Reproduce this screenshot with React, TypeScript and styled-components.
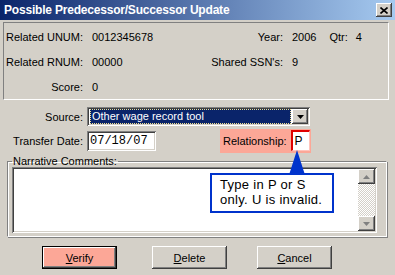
import React from 'react';
import styled, { createGlobalStyle } from 'styled-components';

const Global = createGlobalStyle`
  html, body { margin: 0; padding: 0; background: #d4d0c8; }
  body { font-family: "Liberation Sans", Arial, sans-serif; font-size: 11px; color: #000; }
  * { box-sizing: border-box; }
`;

const Window = styled.div`
  position: relative;
  width: 395px;
  height: 275px;
  overflow: hidden;
  background: #d4d0c8;
  display: flex;
  flex-direction: column;
`;

const TitleBar = styled.div`
  flex: none;
  height: 20px;
  display: flex;
  align-items: center;
  justify-content: space-between;
  padding: 0 3px 0 4px;
  background: linear-gradient(to right, #0a246a, #a6caf0);
  color: #fff;
  font-weight: bold;
  font-size: 12px;
  letter-spacing: -0.2px;
`;

const CloseButton = styled.div`
  width: 16px;
  height: 14px;
  display: flex;
  align-items: center;
  justify-content: center;
  background: #d4d0c8;
  box-shadow: inset -1px -1px #404040, inset 1px 1px #fff, inset -2px -2px #808080;
`;

const Body = styled.div`
  display: flex;
  flex-direction: column;
  padding: 2px 6px 0 3px;
`;

const InfoPanel = styled.div`
  width: 386px;
  height: 78px;
  border: 1px solid;
  border-color: #808080 #fff #fff #808080;
  display: grid;
  grid-template-columns: 79px 100px 82px auto;
  grid-auto-rows: 25px;
  column-gap: 9px;
  align-items: center;
  padding-top: 1px;
`;

const Label = styled.span`
  text-align: right;
  white-space: nowrap;
`;

const Value = styled.span`
  white-space: nowrap;
`;

const YearCell = styled.span`
  display: flex;
  align-items: center;
`;

const Spaced = styled.span<{ $ml: number }>`
  margin-left: ${p => p.$ml}px;
`;

const FormRow = styled.div<{ $mt: number; $h: number }>`
  display: flex;
  align-items: center;
  gap: 4px;
  margin-top: ${p => p.$mt}px;
  height: ${p => p.$h}px;
`;

const FieldLabel = styled.span`
  width: 80px;
  text-align: right;
  white-space: nowrap;
`;

const Select = styled.div`
  width: 223px;
  height: 19px;
  display: flex;
  background: #fff;
  box-shadow: inset 1px 1px #808080, inset -1px -1px #fff, inset 2px 2px #404040, inset -2px -2px #d4d0c8;
  padding: 2px;
`;

const SelectValue = styled.div`
  flex: 1;
  background: #0a246a;
  color: #fff;
  outline: 1px dotted #f0e090;
  outline-offset: -1px;
  padding: 0 2px;
  display: flex;
  align-items: center;
  line-height: 13px;
  margin: 0 1px;
`;

const DropButton = styled.div`
  width: 16px;
  display: flex;
  align-items: center;
  justify-content: center;
  background: #d4d0c8;
  box-shadow: inset -1px -1px #404040, inset 1px 1px #fff, inset -2px -2px #808080;
`;

const MonoInput = styled.div<{ $w: number }>`
  width: ${p => p.$w}px;
  height: 20px;
  background: #fff;
  font-family: "Liberation Mono", "Courier New", monospace;
  font-size: 12px;
  display: flex;
  align-items: center;
  padding-left: 3px;
  box-shadow: inset 1px 1px #808080, inset -1px -1px #fff, inset 2px 2px #404040, inset -2px -2px #d4d0c8;
`;

const RelBox = styled.div`
  margin-left: 60px;
  height: 24px;
  background: #fca797;
  display: flex;
  align-items: center;
  gap: 4px;
  padding: 0 1px 0 3px;
`;

const RelInput = styled.div`
  width: 19px;
  height: 21px;
  background: #fff;
  border-style: solid;
  border-width: 2px 1px 1px 2px;
  border-color: #e00000 #ffc4bc #ffc4bc #e00000;
  font-family: "Liberation Sans", Arial, sans-serif;
  font-size: 12px;
  display: flex;
  align-items: center;
  padding-left: 2px;
`;

const Group = styled.fieldset`
  margin: 2px 0 0 4px;
  width: 380px;
  border: 1px solid;
  border-color: #808080 #fff #fff #808080;
  box-shadow: 1px 1px 0 #fff inset, 1px 1px 0 #808080;
  padding: 0 8px 3px 4px;
`;

const Legend = styled.legend`
  padding: 0 1px;
  line-height: 12px;
`;

const TextArea = styled.div`
  width: 365px;
  height: 66px;
  display: flex;
  padding: 2px;
  background: #fff;
  box-shadow: inset 1px 1px #808080, inset -1px -1px #fff, inset 2px 2px #404040, inset -2px -2px #d4d0c8;
`;

const TextContent = styled.div`
  flex: 1;
  background: #fff;
`;

const ScrollBar = styled.div`
  width: 17px;
  display: flex;
  flex-direction: column;
`;

const ScrollButton = styled.div`
  height: 15px;
  display: flex;
  align-items: center;
  justify-content: center;
  background: #d4d0c8;
  box-shadow: inset -1px -1px #404040, inset 1px 1px #fff, inset -2px -2px #808080;
`;

const Track = styled.div`
  flex: 1;
  background: repeating-conic-gradient(#d4d0c8 0 25%, #fff 0 50%) 0 0 / 2px 2px;
`;

const ButtonRow = styled.div`
  display: flex;
  margin-top: 9px;
  padding-left: 39px;
`;

const Button = styled.div<{ $ml: number; $default?: boolean }>`
  width: 75px;
  height: 23px;
  margin-left: ${p => p.$ml}px;
  display: flex;
  align-items: center;
  justify-content: center;
  background: ${p => (p.$default ? '#fca797' : '#d4d0c8')};
  box-shadow: ${p =>
    p.$default
      ? 'inset 0 0 0 1px #000, inset -2px -2px #404040, inset 2px 2px #fff, inset -3px -3px #808080'
      : 'inset -1px -1px #404040, inset 1px 1px #fff, inset -2px -2px #808080'};
  font-size: 11px;
  u { text-decoration: underline; }
`;

const Callout = styled.div`
  position: absolute;
  left: 210px;
  top: 173px;
  width: 124px;
  height: 40px;
  background: #fff;
  border: 2px solid #0033cc;
  padding: 2px 0 0 8px;
  font-size: 13px;
  line-height: 15px;
  letter-spacing: 0.3px;
`;

const Pointer = styled.svg`
  position: absolute;
  left: 288px;
  top: 150px;
`;

export default function App() {
  return (
    <>
      <Global />
      <Window>
        <TitleBar>
          <span>Possible Predecessor/Successor Update</span>
          <CloseButton>
            <svg width="8" height="7" viewBox="0 0 8 7">
              <path d="M0.5 0.5 L7.5 6.5 M7.5 0.5 L0.5 6.5" stroke="#000" strokeWidth="1.6" />
            </svg>
          </CloseButton>
        </TitleBar>
        <Body>
          <InfoPanel>
            <Label>Related UNUM:</Label>
            <Value>0012345678</Value>
            <Label>Year:</Label>
            <YearCell>
              <span>2006</span>
              <Spaced $ml={13}>Qtr:</Spaced>
              <Spaced $ml={8}>4</Spaced>
            </YearCell>
            <Label>Related RNUM:</Label>
            <Value>00000</Value>
            <Label>Shared SSN's:</Label>
            <Value>9</Value>
            <Label>Score:</Label>
            <Value>0</Value>
          </InfoPanel>
          <FormRow $mt={7} $h={19}>
            <FieldLabel>Source:</FieldLabel>
            <Select>
              <SelectValue>Other wage record tool</SelectValue>
              <DropButton>
                <svg width="7" height="4" viewBox="0 0 7 4">
                  <path d="M0 0 H7 L3.5 4 Z" fill="#000" />
                </svg>
              </DropButton>
            </Select>
          </FormRow>
          <FormRow $mt={2} $h={25}>
            <FieldLabel>Transfer Date:</FieldLabel>
            <MonoInput $w={69}>07/18/07</MonoInput>
            <RelBox>
              <span>Relationship:</span>
              <RelInput>P</RelInput>
            </RelBox>
          </FormRow>
          <Group>
            <Legend>Narrative Comments:</Legend>
            <TextArea>
              <TextContent />
              <ScrollBar>
                <ScrollButton>
                  <svg width="7" height="4" viewBox="0 0 7 4">
                    <path d="M3.5 0 L7 4 H0 Z" fill="#808080" />
                  </svg>
                </ScrollButton>
                <Track />
                <ScrollButton>
                  <svg width="7" height="4" viewBox="0 0 7 4">
                    <path d="M0 0 H7 L3.5 4 Z" fill="#808080" />
                  </svg>
                </ScrollButton>
              </ScrollBar>
            </TextArea>
          </Group>
          <ButtonRow>
            <Button $ml={0} $default>
              <span><u>V</u>erify</span>
            </Button>
            <Button $ml={35}>
              <span><u>D</u>elete</span>
            </Button>
            <Button $ml={30}>
              <span><u>C</u>ancel</span>
            </Button>
          </ButtonRow>
        </Body>
        <Pointer width="18" height="25" viewBox="0 0 18 25">
          <path d="M9 0 L17 25 H1 Z" fill="#0033cc" />
        </Pointer>
        <Callout>
          Type in P or S
          <br />
          only. U is invalid.
        </Callout>
      </Window>
    </>
  );
}
